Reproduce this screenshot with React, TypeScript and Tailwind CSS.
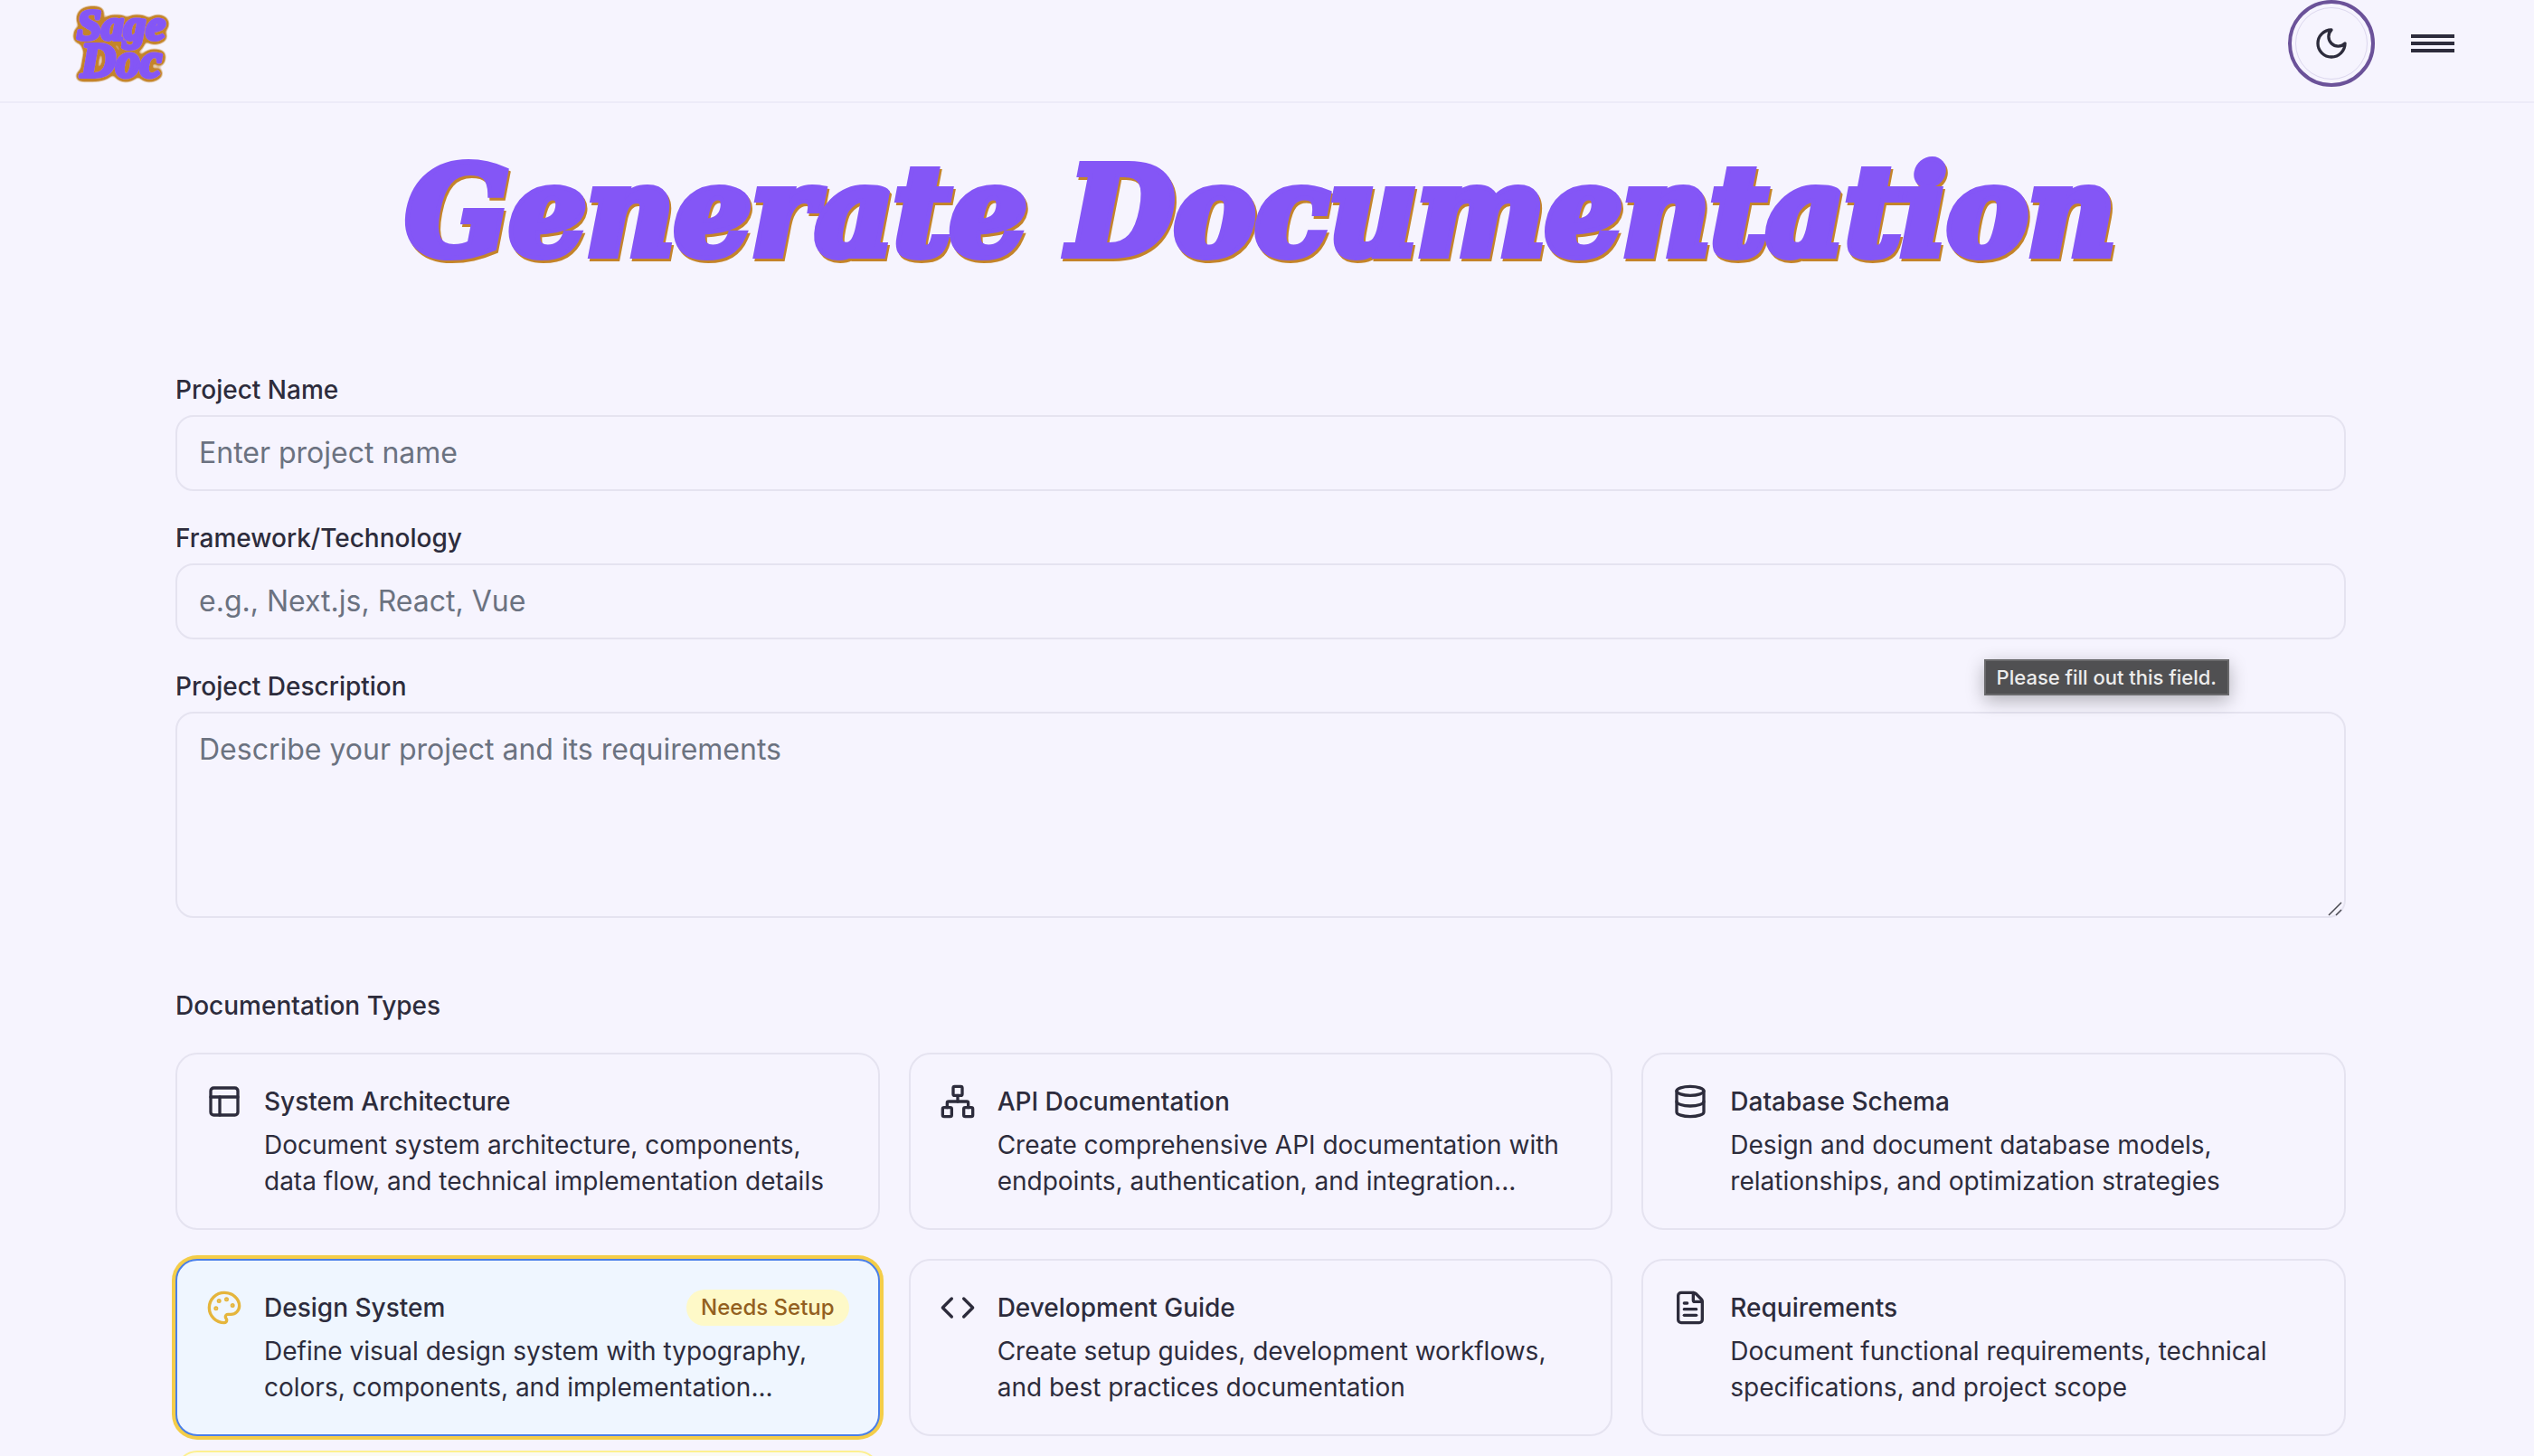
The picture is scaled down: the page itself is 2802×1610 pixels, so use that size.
import React, { useState } from "react";
import { Code, Database, FileText, Network, PanelsTopLeft } from "lucide-react";

type IconProps = { className?: string };

function MoonIcon({ className }: IconProps) {
  return (
    <svg className={className} viewBox="0 0 24 24" fill="none" stroke="currentColor" strokeWidth="2" strokeLinecap="round" strokeLinejoin="round" aria-hidden="true">
      <path d="M12 3a6 6 0 0 0 9 9 9 9 0 1 1-9-9Z" />
    </svg>
  );
}

function PaletteIcon({ className }: IconProps) {
  return (
    <svg className={className} viewBox="0 0 24 24" fill="none" stroke="currentColor" strokeWidth="2" strokeLinecap="round" strokeLinejoin="round" aria-hidden="true">
      <circle cx="13.5" cy="6.5" r=".5" fill="currentColor" />
      <circle cx="17.5" cy="10.5" r=".5" fill="currentColor" />
      <circle cx="8.5" cy="7.5" r=".5" fill="currentColor" />
      <circle cx="6.5" cy="12.5" r=".5" fill="currentColor" />
      <path d="M12 2C6.5 2 2 6.5 2 12s4.5 10 10 10c.926 0 1.648-.746 1.648-1.688 0-.437-.18-.835-.437-1.125-.29-.289-.438-.652-.438-1.125a1.64 1.64 0 0 1 1.668-1.668h1.996c3.051 0 5.555-2.503 5.555-5.554C21.965 6.012 17.461 2 12 2z" />
    </svg>
  );
}

function Logo() {
  return (
    <svg className="h-24 w-28" viewBox="0 0 112 96" role="img" aria-label="Sage Doc">
      <defs>
        <filter id="outline" x="-10%" y="-10%" width="120%" height="120%">
          <feGaussianBlur in="SourceAlpha" stdDeviation="3" result="soft" />
          <feComponentTransfer in="soft" result="edge">
            <feFuncA type="linear" slope="8" intercept="-0.6" />
          </feComponentTransfer>
          <feFlood floodColor="#c4842a" />
          <feComposite in2="edge" operator="in" result="rim" />
          <feMerge>
            <feMergeNode in="rim" />
            <feMergeNode in="SourceGraphic" />
          </feMerge>
        </filter>
      </defs>
      <g filter="url(#outline)" fill="#8456f6" stroke="#8456f6" strokeWidth="4" strokeLinejoin="round" fontFamily="'Liberation Serif', serif" fontWeight="700" fontStyle="italic">
        <text x="5" y="44" fontSize="49">Sage</text>
        <text x="9" y="85" fontSize="54">Doc</text>
      </g>
    </svg>
  );
}

type DocType = {
  title: string;
  text: string;
  icon: React.ComponentType<IconProps>;
  needsSetup?: boolean;
};

const docTypes: DocType[] = [
  { title: "System Architecture", text: "Document system architecture, components, data flow, and technical implementation details", icon: PanelsTopLeft },
  { title: "API Documentation", text: "Create comprehensive API documentation with endpoints, authentication, and integration...", icon: Network },
  { title: "Database Schema", text: "Design and document database models, relationships, and optimization strategies", icon: Database },
  { title: "Design System", text: "Define visual design system with typography, colors, components, and implementation...", icon: PaletteIcon, needsSetup: true },
  { title: "Development Guide", text: "Create setup guides, development workflows, and best practices documentation", icon: Code },
  { title: "Requirements", text: "Document functional requirements, technical specifications, and project scope", icon: FileText },
];

function DocCard({ doc, selected, onSelect }: { doc: DocType; selected: boolean; onSelect: () => void }) {
  const Icon = doc.icon;
  return (
    <button
      type="button"
      aria-pressed={selected}
      onClick={onSelect}
      className={
        selected
          ? "flex w-full items-start gap-6 rounded-3xl border-2 border-[#4a7fe8] bg-[#eff6ff] p-8 text-left ring-4 ring-[#f4cd48]"
          : "flex w-full items-start gap-6 rounded-3xl border-2 border-[#e5e3f0] p-8 text-left"
      }
    >
      <Icon className={selected ? "size-10 shrink-0 text-[#e5b53c]" : "size-10 shrink-0"} />
      <span className="flex min-w-0 flex-1 flex-col gap-2">
        <span className="flex items-center justify-between">
          <span className="font-medium">{doc.title}</span>
          {doc.needsSetup && (
            <span className="rounded-full bg-[#fef9c8] px-4 py-1 text-2xl leading-8 font-medium text-[#93601f]">Needs Setup</span>
          )}
        </span>
        <span>{doc.text}</span>
      </span>
    </button>
  );
}

const fieldClass =
  "block w-full rounded-[20px] border-2 border-[#e5e3f0] bg-transparent px-6 py-4 text-[32px] leading-12 placeholder:text-[#6b7280]";

export default function App() {
  const [selected, setSelected] = useState("Design System");
  return (
    <div className="h-screen overflow-hidden bg-[#f6f4fe] font-['Inter',sans-serif] text-[28px] leading-10 text-[#2d2c3c]">
      <header className="flex h-[114px] items-start justify-between border-b-2 border-[#edebf8] pr-22 pl-20">
        <a href="#home">
          <Logo />
        </a>
        <div className="flex items-center gap-10">
          <button type="button" aria-label="Switch to dark mode" className="flex size-24 items-center justify-center rounded-full border-4 border-[#6b5299] p-1">
            <span className="flex size-20 items-center justify-center rounded-full border border-[#dcd7ee]">
              <MoonIcon className="size-10" />
            </span>
          </button>
          <button type="button" aria-label="Open menu" className="flex w-12 flex-col gap-1">
            <span className="h-1 bg-[#2d2c3c]" />
            <span className="h-1 bg-[#2d2c3c]" />
            <span className="h-1 bg-[#2d2c3c]" />
          </button>
        </div>
      </header>

      <main className="pr-[14px]">
        <h1 className="pt-10 pb-[97px] text-center font-['DejaVu_Serif',serif] text-[134px] leading-40 font-bold text-[#8456f6] italic drop-shadow-[2px_3px_0_#c4842a] [-webkit-text-stroke:10px_#8456f6] [paint-order:stroke_fill] [stroke-linejoin:round]">
          Generate Documentation
        </h1>

        <form className="mx-auto flex max-w-[2400px] flex-col" onSubmit={(e) => e.preventDefault()}>
          <div className="flex flex-col gap-8">
            <div className="flex flex-col gap-2">
              <label htmlFor="name" className="font-medium">Project Name</label>
              <input id="name" type="text" required placeholder="Enter project name" className={fieldClass} />
            </div>
            <div className="flex flex-col gap-2">
              <label htmlFor="framework" className="font-medium">Framework/Technology</label>
              <input id="framework" type="text" required placeholder="e.g., Next.js, React, Vue" className={fieldClass} />
            </div>
            <div className="relative flex flex-col gap-2">
              <label htmlFor="description" className="font-medium">Project Description</label>
              <textarea id="description" rows={4} required placeholder="Describe your project and its requirements" className={`${fieldClass} resize-none`} />
              <svg className="absolute right-1 bottom-0.5 size-4" viewBox="0 0 16 16" stroke="#4a4a52" strokeWidth="1.5" aria-hidden="true">
                <path d="M1 15 15 1M9 15l6-6" />
              </svg>
              <div role="tooltip" className="absolute -top-2.5 right-[129px] flex h-10 items-center border-2 border-[#69696b] bg-[#505052] px-3 text-[22px] leading-8 font-medium whitespace-nowrap text-[#ececec] shadow-[0_6px_20px_rgba(0,0,0,0.28)]">
                Please fill out this field.
              </div>
            </div>
          </div>

          <fieldset className="mt-[77px]">
            <legend className="mb-8 font-medium">Documentation Types</legend>
            <div className="grid grid-cols-3 items-start gap-8">
              {docTypes.map((doc) => (
                <div key={doc.title} className="flex flex-col gap-4">
                  <DocCard doc={doc} selected={doc.title === selected} onSelect={() => setSelected(doc.title)} />
                  {doc.needsSetup && <div className="h-40 rounded-3xl border-2 border-[#fdf08f] bg-[#fbfaf3]" />}
                </div>
              ))}
            </div>
          </fieldset>
        </form>
      </main>
    </div>
  );
}
